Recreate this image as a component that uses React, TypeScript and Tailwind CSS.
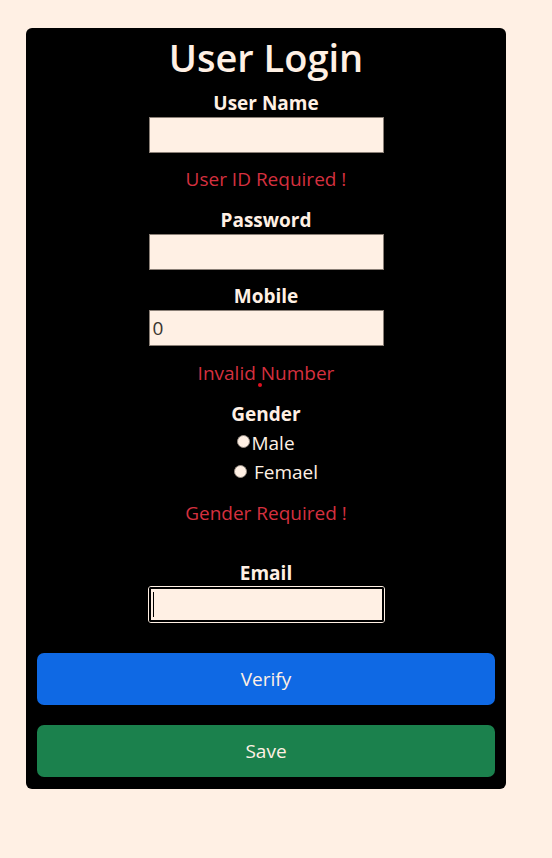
import React from "react";

const font = { fontFamily: '"Open Sans", "Noto Sans", sans-serif' };

function Label({ children, cls = "" }: { children: React.ReactNode; cls?: string }) {
  return (
    <div className={`h-[27px] leading-[27px] text-[19px] font-bold text-[#fff0e4] text-center ${cls}`}>
      {children}
    </div>
  );
}

function Field({ value = "" }: { value?: string }) {
  return (
    <div className="flex justify-center">
      <div className="w-[235px] h-[36px] bg-[#fff0e4] border border-[#8a7f76] flex items-center pl-[3px] text-[19px] text-[#3a3530]">
        {value}
      </div>
    </div>
  );
}

function Err({ children, cls = "" }: { children: React.ReactNode; cls?: string }) {
  return (
    <div className={`h-[27px] leading-[27px] text-[19px] text-[#d5303f] text-center ${cls}`}>{children}</div>
  );
}

function Radio() {
  return <span className="inline-block w-[13px] h-[13px] rounded-full bg-[#fff0e4] border border-[#9a8f86]" />;
}

export default function App() {
  return (
    <div className="min-h-[858px] w-full bg-[#fff0e4] pt-[28px] pl-[26px]" style={font}>
      <div className="w-[480px] bg-black rounded-[6px] px-[11px] pb-[12px] pt-[4px]">
        <div className="h-[50px] leading-[50px] text-center text-[38px] font-semibold text-[#fff0e4]">User Login</div>
        <div className="mt-[8px]">
          <Label>User Name</Label>
          <Field />
          <Err cls="mt-[13px]">User ID Required !</Err>
          <Label cls="mt-[14px]">Password</Label>
          <Field />
          <Label cls="mt-[13px]">Mobile</Label>
          <Field value="0" />
          <div className="relative mt-[14px]">
            <Err>Invalid Number</Err>
            <span className="absolute left-[221px] top-[23px] w-[4px] h-[4px] rounded-full bg-[#e01020]" />
          </div>
          <Label cls="mt-[14px]">Gender</Label>
          <div className="flex justify-center items-center h-[30px] text-[19px] text-[#fff0e4]">
            <span className="-mt-[4px] mr-px flex"><Radio /></span>
            <span>Male</span>
          </div>
          <div className="flex justify-center items-center h-[29px] text-[19px] text-[#fff0e4] pl-[20px]">
            <span className="-mt-[2px] mr-[7px] flex"><Radio /></span>
            <span>Femael</span>
          </div>
          <Err cls="mt-[13px]">Gender Required !</Err>
          <Label cls="mt-[33px]">Email</Label>
          <div className="flex justify-center -mt-px">
            <div className="w-[237px] h-[37px] border border-[#fff0e4] rounded-[3px] p-0">
              <div className="w-full h-full border-2 border-black rounded-[2px] bg-[#fff0e4] flex items-center pl-[2px]">
                <span className="w-px h-[25px] bg-black" />
              </div>
            </div>
          </div>
          <div className="mt-[30px] h-[52px] rounded-[7px] bg-[#0f69e4] text-[#fff0e4] text-[19px] flex items-center justify-center">
            Verify
          </div>
          <div className="mt-[20px] h-[52px] rounded-[7px] bg-[#1b814d] text-[#fff0e4] text-[19px] flex items-center justify-center">
            Save
          </div>
        </div>
      </div>
    </div>
  );
}
